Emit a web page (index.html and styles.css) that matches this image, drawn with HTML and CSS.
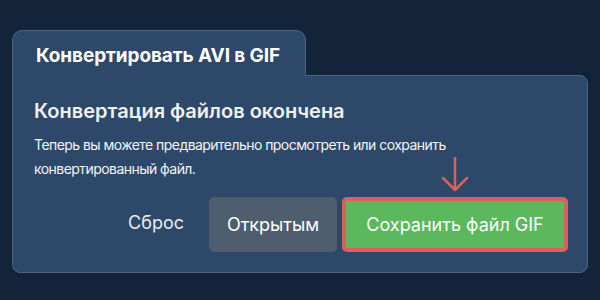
FILE: index.html
```html
<!DOCTYPE html>
<html lang="ru">
<head>
  <meta charset="UTF-8" />
  <meta name="viewport" content="width=device-width, initial-scale=1" />
  <title>Конвертировать AVI в GIF</title>
  <link rel="stylesheet" href="styles.css">
</head>
<body>

  <div class="dialog">
    <div class="tab">Конвертировать AVI в GIF</div>
    <div class="panel">
      <h2 class="title">Конвертация файлов окончена</h2>
      <p class="text">Теперь вы можете предварительно просмотреть или сохранить конвертированный файл.</p>
      <div class="actions">
        <button class="btn btn-link">Сброс</button>
        <button class="btn btn-gray">Открытым</button>
        <div class="save-wrap">
          <svg class="arrow" width="28" height="36" viewBox="0 0 28 36">
            <path d="M14 1 V33 M2 21 L14 33 L26 21" fill="none" stroke="#d9605c" stroke-width="2.5" stroke-linecap="round" stroke-linejoin="round"/>
          </svg>
          <button class="btn btn-green">Сохранить файл GIF</button>
        </div>
      </div>
    </div>
  </div>

</body>
</html>
```

FILE: styles.css
```css
body {
  margin: 0;
  background: #12233a;
  font-family: Inter, "Noto Sans", sans-serif;
  color: #ffffff;
  width: 600px;
  height: 300px;
  overflow: hidden;
}
.dialog {
  padding: 30px 12px 0 12px;
}
.tab {
  position: relative;
  z-index: 1;
  width: 294px;
  height: 46px;
  box-sizing: border-box;
  margin-bottom: -1px;
  padding: 3px 0 0 23px;
  display: flex;
  align-items: center;
  background: #2d4868;
  border: 1px solid #4b6483;
  border-bottom: none;
  border-radius: 10px 10px 0 0;
  font-size: 19px;
  font-weight: 700;
  letter-spacing: -0.1px;
}
.panel {
  width: 576px;
  box-sizing: border-box;
  background: #2d4868;
  border: 1px solid #4b6483;
  border-radius: 0 8px 8px 8px;
  padding: 23px 19px 20px 21px;
}
.title {
  margin: 0 0 10px 0;
  font-size: 20px;
  line-height: 24px;
  font-weight: 600;
  color: #eef1f5;
}
.text {
  margin: 0 0 16px 0;
  font-size: 14px;
  line-height: 24px;
  letter-spacing: -0.55px;
  color: #f2f4f7;
  width: 420px;
}
.actions {
  display: flex;
  justify-content: flex-end;
  align-items: center;
  gap: 5px;
}
.btn {
  font-family: inherit;
  font-size: 18px;
  height: 55px;
  border: none;
  border-radius: 5px;
  color: #ffffff;
  padding: 0 18px;
  cursor: pointer;
}
.btn-link {
  background: none;
  color: #e8ecf1;
  padding: 0 20px 4px 18px;
}
.btn-gray {
  background: #4e5e6e;
  width: 128px;
  padding: 0;
}
.save-wrap {
  position: relative;
}
.arrow {
  position: absolute;
  left: 99px;
  top: -40px;
}
.btn-green {
  background: #5cb85c;
  border: 4px solid #d9605c;
  width: 226px;
  height: 55px;
  padding: 0;
  border-radius: 5px;
}
```
